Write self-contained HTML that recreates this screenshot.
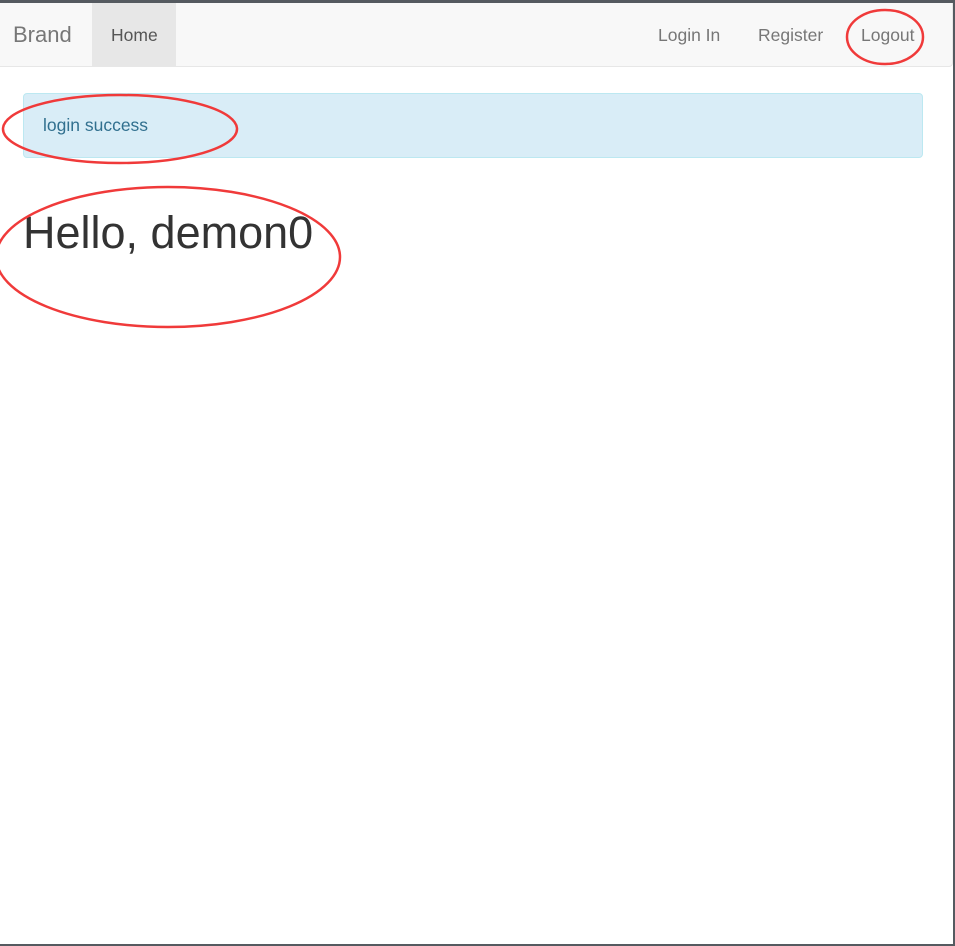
<!DOCTYPE html>
<html><head><style>
html,body{margin:0;padding:0;}
body{width:955px;height:946px;position:relative;background:#fff;font-family:"Liberation Sans",Arial,sans-serif;overflow:hidden;}
.frame{position:absolute;left:0;top:0;width:955px;height:946px;box-sizing:border-box;border-top:3px solid #555a60;border-right:2px solid #555a60;border-bottom:2px solid #555a60;}
.nav{position:absolute;left:0;top:3px;width:952px;height:63px;background:#f8f8f8;border-bottom:1px solid #e7e7e7;border-right:1px solid #e7e7e7;border-radius:0 0 4px 0;}
.t{position:absolute;color:#777;font-size:17.5px;line-height:20px;white-space:nowrap;}
.home{position:absolute;left:92px;top:0;width:84px;height:63px;background:#e7e7e7;}
.alert{position:absolute;left:23px;top:93px;width:900px;height:65px;background:#d9edf7;border:1px solid #bce8f1;border-radius:4px;box-sizing:border-box;}
</style></head><body>
<div class="nav">
<div class="t" style="left:13px;top:22px;font-size:22px;">Brand</div>
<div class="home"></div>
<div class="t" style="left:111px;top:22px;color:#555;">Home</div>
<div class="t" style="left:658px;top:22px;">Login In</div>
<div class="t" style="left:758px;top:22px;">Register</div>
<div class="t" style="left:861px;top:22px;">Logout</div>
</div>
<div class="alert"></div>
<div class="t" style="left:43px;top:115px;color:#31708f;">login success</div>
<div class="t" style="left:23px;top:208px;color:#333;font-size:45px;line-height:50px;">Hello, demon0</div>
<svg width="955" height="946" style="position:absolute;left:0;top:0" fill="none" stroke="#f03a3a" stroke-width="2.5">
<ellipse cx="885" cy="37" rx="38" ry="27"/>
<ellipse cx="120" cy="129" rx="117" ry="34"/>
<ellipse cx="168" cy="257" rx="172" ry="70"/>
</svg>
<div class="frame"></div>
</body></html>
